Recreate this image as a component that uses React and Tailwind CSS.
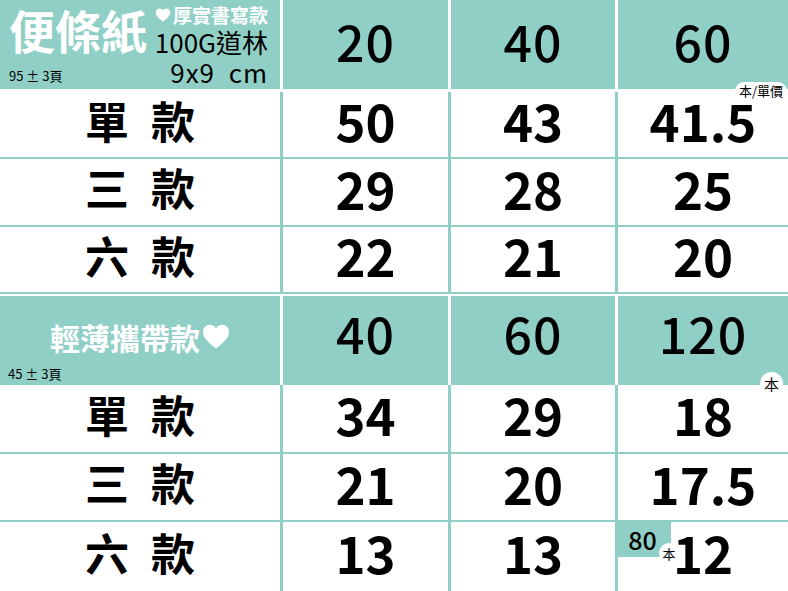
import React from "react";

const TEAL = "bg-[#90cfc5]";

function Heart({ className }) {
  return (
    <svg viewBox="0 0 24 22" className={className} fill="white">
      <path d="M12 21.5 C5 16 0.5 12 0.5 6.8 C0.5 3.3 3.2 0.6 6.6 0.6 C8.9 0.6 10.8 1.8 12 3.7 C13.2 1.8 15.1 0.6 17.4 0.6 C20.8 0.6 23.5 3.3 23.5 6.8 C23.5 12 19 16 12 21.5 Z" />
    </svg>
  );
}

const rowsA = [
  ["單", "款", "50", "43", "41.5"],
  ["三", "款", "29", "28", "25"],
  ["六", "款", "22", "21", "20"],
];

const rowsB = [
  ["單", "款", "34", "29", "18"],
  ["三", "款", "21", "20", "17.5"],
  ["六", "款", "13", "13", "12"],
];

function Label({ a, b }) {
  return (
    <div className="w-[280px] bg-white flex items-center justify-center gap-[22px] pb-[10px] text-[44px] font-bold leading-none text-black">
      <span>{a}</span>
      <span>{b}</span>
    </div>
  );
}

function Num({ children, w, extra }) {
  return (
    <div className={`${w} relative bg-white flex items-center justify-center pb-[8px] text-[51px] font-bold leading-none text-black`}>
      {extra}
      <span>{children}</span>
    </div>
  );
}

function BodyBlock({ rows, heights, badges }) {
  return (
    <div className={`${TEAL} flex flex-col gap-[2px]`}>
      {rows.map((r, i) => (
        <div key={i} className={`flex gap-[3px] ${heights[i]}`}>
          <Label a={r[0]} b={r[1]} />
          <Num w="w-[165px]">{r[2]}</Num>
          <Num w="w-[164px]">{r[3]}</Num>
          <Num w="flex-1" extra={badges[i]}>{r[4]}</Num>
        </div>
      ))}
    </div>
  );
}

function HeadNum({ children, w, pad }) {
  return (
    <div className={`${w} ${TEAL} ${pad} flex items-center justify-center text-[50px] font-medium leading-none text-black`}>
      <span className="tracking-[1px]">{children}</span>
    </div>
  );
}

export default function App() {
  return (
    <div className="w-[788px] h-[591px] overflow-hidden bg-white font-['Noto_Sans_CJK_TC',sans-serif]">
      {/* header 1 */}
      <div className="flex gap-[3px] h-[89px]">
        <div className={`w-[280px] ${TEAL} flex pl-[9px] pr-[12px]`}>
          <div className="flex flex-col justify-between">
            <div className="text-[46px] font-bold leading-none text-white pt-[6px]">便條紙</div>
            <div className="text-[13px] leading-none text-black pb-[7px]">95 ± 3頁</div>
          </div>
          <div className="ml-auto flex flex-col items-end text-black">
            <div className="flex items-center gap-[2px] text-[19px] font-bold text-white leading-[24px] pt-[3px]">
              <Heart className="w-[16px] h-[14px]" />
              <span>厚實書寫款</span>
            </div>
            <div className="text-[26px] leading-[30px]">100G道林</div>
            <div className="text-[26px] leading-[30px] tracking-[1px]">9x9&nbsp; cm</div>
          </div>
        </div>
        <HeadNum w="w-[165px]" pad="pb-[10px]">20</HeadNum>
        <HeadNum w="w-[164px]" pad="pb-[10px]">40</HeadNum>
        <HeadNum w="flex-1" pad="pb-[10px]">60</HeadNum>
      </div>

      <div className="h-[3px]" />

      <div className={`${TEAL} pb-[2px]`}>
        <BodyBlock
          rows={rowsA}
          heights={["h-[65px]", "h-[66px]", "h-[65px]"]}
          badges={[
            <div key="p" className="absolute top-[-10px] right-[1px] z-10 bg-white rounded-t-[9px] px-[4px] h-[17px] flex items-center text-[13px] font-normal leading-none text-black">
              本/單價
            </div>,
            null,
            null,
          ]}
        />
      </div>

      <div className="h-[2px]" />

      {/* header 2 */}
      <div className="flex gap-[3px] h-[89px]">
        <div className={`w-[280px] ${TEAL} flex flex-col`}>
          <div className="flex-1 flex items-center justify-center pt-[10px] gap-[2px] text-[30px] font-bold leading-none text-white">
            <span>輕薄攜帶款</span>
            <Heart className="w-[28px] h-[25px]" />
          </div>
          <div className="text-[13px] leading-none text-black pl-[8px] pb-[5px]">45 ± 3頁</div>
        </div>
        <HeadNum w="w-[165px]" pad="pb-[18px]">40</HeadNum>
        <HeadNum w="w-[164px]" pad="pb-[18px]">60</HeadNum>
        <HeadNum w="flex-1" pad="pb-[18px]">120</HeadNum>
      </div>

      <BodyBlock
        rows={rowsB}
        heights={["h-[67px]", "h-[66px]", "h-[69px]"]}
        badges={[
          <div key="b" className="absolute top-[-13px] right-[5px] z-10 w-[23px] h-[23px] rounded-full bg-white flex items-center justify-center text-[15px] font-normal leading-none text-black">
            本
          </div>,
          null,
          <div key="c" className="absolute top-0 left-0">
            <div className={`${TEAL} w-[53px] h-[35px] flex items-center justify-center pr-[4px] text-[25px] font-medium leading-none text-black`}>
              80
            </div>
            <div className="absolute left-[41px] top-[21px] w-[20px] h-[20px] rounded-full bg-white flex items-center justify-center text-[13px] font-normal leading-none text-black">
              本
            </div>
          </div>,
        ]}
      />
    </div>
  );
}
